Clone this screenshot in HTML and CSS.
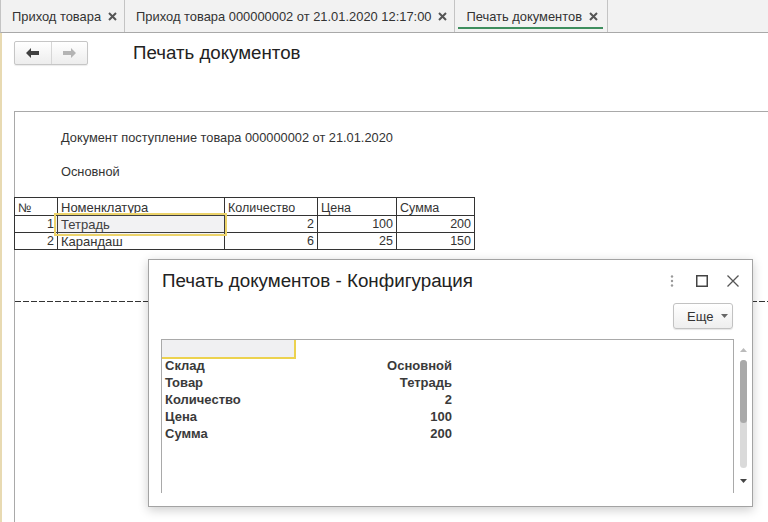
FILE: index.html
```html
<!DOCTYPE html>
<html lang="ru">
<head>
<meta charset="utf-8">
<title>Печать документов</title>
<link rel="stylesheet" href="styles.css">
</head>
<body>
<div class="tabs">
  <div class="tab"><span>Приход товара</span><svg class="tx" width="9" height="9" viewBox="0 0 9 9"><path d="M1 1L8 8M8 1L1 8"/></svg></div>
  <div class="tab"><span>Приход товара 000000002 от 21.01.2020 12:17:00</span><svg class="tx" width="9" height="9" viewBox="0 0 9 9"><path d="M1 1L8 8M8 1L1 8"/></svg></div>
  <div class="tab active"><span>Печать документов</span><svg class="tx" width="9" height="9" viewBox="0 0 9 9"><path d="M1 1L8 8M8 1L1 8"/></svg></div>
</div>
<div class="page">
  <div class="toolbar">
    <div class="nav">
      <div class="navbtn"><svg width="13" height="10" viewBox="0 0 13 10"><path class="arr-on" d="M0 5L5 0V3H13V7H5V10Z"/></svg></div>
      <div class="navbtn"><svg width="13" height="10" viewBox="0 0 13 10"><path class="arr-off" d="M13 5L8 0V3H0V7H8V10Z"/></svg></div>
    </div>
    <h1 class="title">Печать документов</h1>
  </div>
  <div class="sheet">
    <p class="line l1">Документ поступление товара 000000002 от 21.01.2020</p>
    <p class="line l2">Основной</p>
    <table class="doc">
      <colgroup><col class="c1"><col class="c2"><col class="c3"><col class="c4"><col class="c5"></colgroup>
      <tr class="hd"><td>№</td><td>Номенклатура</td><td>Количество</td><td>Цена</td><td>Сумма</td></tr>
      <tr><td class="r">1</td><td class="selcell">Тетрадь<span class="sel"></span></td><td class="r">2</td><td class="r">100</td><td class="r">200</td></tr>
      <tr><td class="r">2</td><td>Карандаш</td><td class="r">6</td><td class="r">25</td><td class="r">150</td></tr>
    </table>
    <div class="dash"></div>
  </div>
</div>

<div class="dialog">
  <div class="dhead">
    <div class="dtitle">Печать документов - Конфигурация</div>
    <div class="dicons">
      <svg width="4" height="12" viewBox="0 0 4 12"><circle cx="2" cy="1.5" r="1.2"/><circle cx="2" cy="6" r="1.2"/><circle cx="2" cy="10.5" r="1.2"/></svg>
      <svg width="12" height="12" viewBox="0 0 12 12"><rect x="0.75" y="0.75" width="10.5" height="10.5" class="sq"/></svg>
      <svg width="12" height="12" viewBox="0 0 12 12"><path class="cl" d="M0.5 0.5L11.5 11.5M11.5 0.5L0.5 11.5"/></svg>
    </div>
  </div>
  <div class="dbar">
    <div class="more">Еще <svg width="7" height="4" viewBox="0 0 7 4"><path d="M0 0H7L3.5 4Z"/></svg></div>
  </div>
  <div class="dbody">
    <div class="grid">
      <div class="selhead"></div>
      <div class="kv">
        <span>Склад</span><span class="v">Основной</span>
        <span>Товар</span><span class="v">Тетрадь</span>
        <span>Количество</span><span class="v">2</span>
        <span>Цена</span><span class="v">100</span>
        <span>Сумма</span><span class="v">200</span>
      </div>
    </div>
    <div class="vscroll">
      <svg class="up" width="7" height="4" viewBox="0 0 7 4"><path d="M0 4H7L3.5 0Z"/></svg>
      <div class="track"><div class="thumb"></div></div>
      <svg class="down" width="7" height="4" viewBox="0 0 7 4"><path d="M0 0H7L3.5 4Z"/></svg>
    </div>
  </div>
</div>
</body>
</html>
```

FILE: styles.css
```css
* { box-sizing: border-box; margin: 0; padding: 0; }
html, body { width: 768px; height: 522px; overflow: hidden; background: #fff; }
body { font-family: "Liberation Sans", Arial, sans-serif; color: #333; position: relative; }

.tabs { display: flex; height: 33px; background: #f2f2f2; border-bottom: 1px solid #a9a9a9; border-left: 1px solid #c4c4c4; }
.tab { position: relative; display: flex; align-items: center; gap: 7px; padding: 0 7px 0 11px; border-right: 1px solid #c4c4c4; font-size: 12.9px; color: #333; }
.tab .tx { stroke: #555; stroke-width: 2; fill: none; }
.tab.active { padding-right: 9px; }
.tab.active::after { content: ""; position: absolute; left: 3px; right: 4px; bottom: 3px; height: 2px; background: #3e8e5e; }

.page { height: 489px; border-left: 2px solid #e8dab2; display: flex; flex-direction: column; }
.toolbar { height: 78px; display: flex; align-items: flex-start; padding: 8px 0 0 12px; }
.nav { display: flex; width: 74px; height: 24px; border: 1px solid #c6c6c6; border-radius: 2px; background: linear-gradient(#fff, #ededed); box-shadow: 0 1px 1px rgba(0,0,0,0.08); }
.navbtn { flex: 1; display: flex; align-items: center; justify-content: center; }
.navbtn + .navbtn { border-left: 1px solid #d6d6d6; }
.arr-on { fill: #404040; }
.arr-off { fill: #b4b4b4; }
.title { font-weight: normal; font-size: 18.7px; color: #222; margin-left: 45px; margin-top: 1px; line-height: 22px; }

.sheet { flex: 1; margin-left: 12px; border-top: 1px solid #a9a9a9; border-left: 1px solid #a9a9a9; }
.line { font-size: 12.8px; line-height: 15px; padding-left: 46px; color: #333; }
.l1 { margin-top: 18px; }
.l2 { margin-top: 19px; }

.doc { margin-top: 18px; margin-left: -1px; border-collapse: collapse; table-layout: fixed; width: 460px; font-size: 12.5px; color: #333; }
.c1 { width: 43px; } .c2 { width: 167px; } .c3 { width: 93px; } .c4 { width: 79px; } .c5 { width: 78px; }
.doc td { border: 1px solid #333; height: 17px; padding: 0 3px; line-height: 15px; white-space: nowrap; overflow: visible; }
.doc .hd td { padding-top: 3px; line-height: 14px; overflow: hidden; }
.doc td.r { text-align: right; }
.doc td.selcell { position: relative; }
.doc td:nth-child(2) { font-size: 13px; }
.sel { position: absolute; left: -4px; top: -3px; width: 173px; height: 23px; border: 2px solid #ecd36a; background: rgba(150,150,160,0.12); }

.dash { margin-top: 51px; height: 1px; background: repeating-linear-gradient(to right, #333 0 6px, transparent 6px 8px); }

.dialog { position: absolute; left: 148px; top: 259px; width: 605px; height: 248px; background: #fff; border: 1px solid #a3a3a3; box-shadow: 0 3px 10px rgba(0,0,0,0.2); display: flex; flex-direction: column; }
.dhead { display: flex; align-items: center; justify-content: space-between; height: 42px; padding: 0 13px 0 13px; }
.dtitle { font-size: 18.8px; color: #222; }
.dicons { display: flex; align-items: center; gap: 0; }
.dicons svg { fill: #777; }
.dicons svg:nth-child(1) { margin-right: 22px; fill: #999; }
.dicons svg:nth-child(2) { margin-right: 19px; }
.sq { fill: none; stroke: #444; stroke-width: 1.5; }
.cl { fill: none; stroke: #555; stroke-width: 1.3; }
.dbar { display: flex; justify-content: flex-end; padding: 1px 19px 0 0; height: 37px; }
.more { display: flex; align-items: center; gap: 8px; width: 60px; height: 26px; padding-left: 13px; border: 1px solid #c2c2c2; border-radius: 3px; background: linear-gradient(#fff, #eeeeee); box-shadow: 0 1px 1px rgba(0,0,0,0.1); font-size: 13px; color: #333; }
.more svg { fill: #666; }

.dbody { display: flex; padding-left: 12px; }
.grid { width: 574px; height: 154px; border: 1px solid #a9a9a9; border-bottom: none; }
.selhead { width: 134px; height: 19px; background: #f0f0f2; border-right: 2px solid #ecd24f; border-bottom: 2px solid #ecd24f; }
.kv { display: grid; grid-template-columns: 134px 159px; margin-top: -2px; font-size: 13px; font-weight: bold; line-height: 17px; color: #3a3a3a; }
.kv span { padding-left: 3px; }
.kv .v { text-align: right; padding: 0 3px 0 0; }

.vscroll { width: 18px; display: flex; flex-direction: column; align-items: center; padding-top: 9px; }
.vscroll .up { fill: #bbb; }
.vscroll .down { fill: #444; }
.track { margin-top: 8px; width: 7px; height: 108px; border-radius: 4px; background: #dadada; }
.thumb { width: 7px; height: 63px; border-radius: 4px; background: #a9a9a9; }
.vscroll .down { margin-top: 11px; }
```
